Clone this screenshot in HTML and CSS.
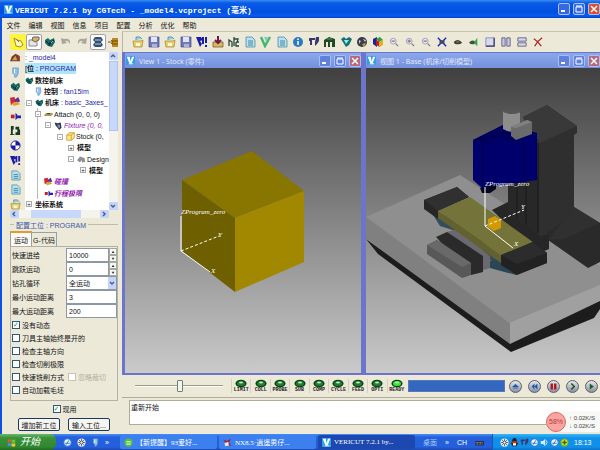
FILE: index.html
```html
<!DOCTYPE html>
<html lang="zh-CN">
<head>
  <meta charset="UTF-8">
  <title>VERICUT 7.2.1</title>
  <link rel="stylesheet" href="styles.css">
</head>
<body>
  <!-- icon set -->
  <svg class="sprite" aria-hidden="true">
    <symbol id="logo" viewBox="0 0 12 12"><rect width="12" height="12" fill="#2f9fe8"/><path d="M1 1h4l1 6 2-6h3L7 11H5z" fill="#fff"/><path d="M6 8l5 3H3z" fill="#cdeaff"/></symbol>
    <symbol id="hand" viewBox="0 0 12 12"><path d="M2 2l3 2 4 1 2 4-3 2-4-1-1-4z" fill="#fff6c0" stroke="#a09020"/><path d="M4 3l3 3" stroke="#776"/></symbol>
    <symbol id="note" viewBox="0 0 12 12"><path d="M1 4h8v6H1z" fill="#e8e8e0" stroke="#889"/><path d="M5 1h6v3L7 6 4 4z" fill="#d8b070" stroke="#665"/></symbol>
    <symbol id="machine" viewBox="0 0 12 12"><path d="M1 4l3-2 2 2 4-2 1 4-3 5-4-1-3-3z" fill="#186868"/><path d="M2 5l3 3 5-4M5 10l2-4" stroke="#0a2230" fill="none"/><path d="M7 7l2-2" stroke="#7ed0a0"/></symbol>
    <symbol id="undo" viewBox="0 0 12 12"><path d="M1 2l1 6 5-1-2-2q3-1 5 3 1-6-6-5z" fill="#a8a69a"/></symbol>
    <symbol id="redo" viewBox="0 0 12 12"><path d="M11 2l-1 6-5-1 2-2q-3-1-5 3-1-6 6-5z" fill="#a8a69a"/></symbol>
    <symbol id="spool" viewBox="0 0 12 12"><path d="M3 1h6l2 3-2 2 2 3-2 2H3L1 9l2-3-2-2z" fill="#345070"/><path d="M3 4h6M3 8h6" stroke="#b8d0e8"/></symbol>
    <symbol id="barrel" viewBox="0 0 12 12"><path d="M4 2h6v9H4z" fill="#c08820"/><path d="M4 5h6M4 8h6" stroke="#704800"/><path d="M0 6h5M3 4l2 2-2 2" stroke="#905010" fill="none"/></symbol>
    <symbol id="open" viewBox="0 0 12 12"><path d="M1 5h8l2-1-1 7H2z" fill="#e8d070" stroke="#a08428" stroke-width=".7"/><path d="M4 4V1h4l2 2" fill="#9cd0e8" stroke="#388098" stroke-width=".7"/><path d="M4 7h4v3H4z" fill="#fff8d0"/></symbol>
    <symbol id="save" viewBox="0 0 12 12"><path d="M1 1h10v10H1z" fill="#7078c0" stroke="#404890" stroke-width=".7"/><path d="M3 1h6v5H3z" fill="#dfe4ff"/><path d="M4 8h5v3H4z" fill="#b0b4d0"/></symbol>
    <symbol id="toolsblue" viewBox="0 0 12 12"><path d="M0 1h5l2 3-3 1 2 3-2 3-2-5zM6 1h2v7H6zM9 1h2v6H9zM9 9h2v2H9z" fill="#1c1ca8"/></symbol>
    <symbol id="import" viewBox="0 0 12 12"><path d="M1 6h10v5H1z" fill="#d8b860" stroke="#705010" stroke-width=".7"/><path d="M6 0v7M3 4l3 3 3-3" fill="none" stroke="#701850" stroke-width="2"/></symbol>
    <symbol id="ncode" viewBox="0 0 12 12"><path d="M1 10V4l3 2v5M6 1v9M6 3h4l-1 3h2M8 6v4h3" fill="none" stroke="#28483c" stroke-width="1.3"/></symbol>
    <symbol id="doc" viewBox="0 0 12 12"><path d="M2 1h6l3 3v7H2z" fill="#b8e0ee" stroke="#4890a8" stroke-width=".8"/><path d="M4 5h5M4 7h5M4 9h5" stroke="#4888a0"/></symbol>
    <symbol id="check" viewBox="0 0 12 12"><path d="M1 1l4 9 5-9" fill="none" stroke="#40b868" stroke-width="2.4"/><path d="M4 1l2 5 2-5" fill="#80c8e0"/></symbol>
    <symbol id="info" viewBox="0 0 12 12"><circle cx="6" cy="6" r="5" fill="#2f78c0"/><path d="M6 5v4M6 2.500v1.500" stroke="#fff" stroke-width="1.500"/></symbol>
    <symbol id="mill" viewBox="0 0 12 12"><path d="M1 2h6v2H4v5H2V5H1zM8 1h3v4L9 8 7 10V6z" fill="#38386c"/></symbol>
    <symbol id="books" viewBox="0 0 12 12"><path d="M0 4l5-3 6 2v8H8V6H6v5H4V6H2v5H0z" fill="#204828"/><path d="M3 3h5" stroke="#58a050"/></symbol>
    <symbol id="gem" viewBox="0 0 12 12"><path d="M1 3l3-2 2 2 3-2 3 2-3 6-3 2z" fill="#107078"/><path d="M4 4l2 4 3-4z" fill="#a0e8d8"/></symbol>
    <symbol id="film" viewBox="0 0 12 12"><circle cx="6" cy="6" r="5" fill="#3c3c4c"/><path d="M3 4l2 1-2 3zM7 3l3 1-1 2z" fill="#c8c8e0"/><path d="M6 8l4-1-2 4z" fill="#c8a020"/></symbol>
    <symbol id="cubes" viewBox="0 0 12 12"><path d="M1 3l4-2v10l-4-3z" fill="#20209a"/><path d="M4 3l4-2 3 3-4 2z" fill="#30a040"/><path d="M4 4l4 2v5L4 9z" fill="#c02020"/><path d="M7 6l4-2v5l-4 2z" fill="#e0b020"/></symbol>
    <symbol id="zoom" viewBox="0 0 12 12"><circle cx="5" cy="5" r="3.500" fill="#e8e8f4" stroke="#9898a8"/><path d="M3 5h4M8 8l3 3" stroke="#787888" stroke-width="1.400"/></symbol>
    <symbol id="zoomin" viewBox="0 0 12 12"><circle cx="5" cy="5" r="3.500" fill="#e8e8f4" stroke="#9898a8"/><path d="M3 5h4M5 3v4M8 8l3 3" stroke="#787888" stroke-width="1.400"/></symbol>
    <symbol id="fit" viewBox="0 0 12 12"><path d="M1 1l10 10M11 1L1 11" stroke="#2020b0" stroke-width="1.600"/><path d="M3 4h6v4H3z" fill="#385060"/></symbol>
    <symbol id="eye" viewBox="0 0 12 12"><path d="M1 6q5-5 10 1-4 3-9 1z" fill="#38402c"/><path d="M4 6h3" stroke="#a8b090"/></symbol>
    <symbol id="speak" viewBox="0 0 12 12"><path d="M0 7q3-4 7-2v3q-4 2-7-1z" fill="#38583c"/><path d="M7 5l3-4v10L7 8z" fill="#30a848"/></symbol>
    <symbol id="pane" viewBox="0 0 12 12"><path d="M1 1h10v10H1z" fill="#d8d8f0" stroke="#8888a8"/><path d="M11 1v10H1" fill="none" stroke="#383868" stroke-width="1.500"/></symbol>
    <symbol id="panev" viewBox="0 0 12 12"><path d="M1 1h4v10H1zM7 1h4v10H7z" fill="#c8c8e4" stroke="#585878"/></symbol>
    <symbol id="paneh" viewBox="0 0 12 12"><path d="M1 1h10v4H1zM1 7h10v4H1z" fill="#d8d8ec" stroke="#585878"/></symbol>
    <symbol id="cross" viewBox="0 0 12 12"><path d="M1 2q5 3 9 9M11 1Q5 5 2 11" fill="none" stroke="#b02020" stroke-width="1.500"/></symbol>
    <symbol id="hat" viewBox="0 0 12 12"><path d="M0 10l2-5 4-3 4 2 1 6z" fill="#704030"/><path d="M2 9l4-5 2 5z" fill="#d8a040"/><path d="M8 3l3 2-1 4z" fill="#c03020"/></symbol>
    <symbol id="control" viewBox="0 0 12 12"><path d="M3 1h6v6L7 11H5V8L3 7z" fill="#90c0e8" stroke="#5888b8" stroke-width=".7"/><path d="M5 2v5" stroke="#fff"/></symbol>
    <symbol id="crash" viewBox="0 0 12 12"><path d="M0 2l5-1 1 5-5 4z" fill="#d02838"/><path d="M5 4l4-3 2 5-5 2z" fill="#603090"/><path d="M2 8l6-2 3 3-7 2z" fill="#e0a030"/></symbol>
    <symbol id="limit" viewBox="0 0 12 12"><path d="M1 4h4v4H1z" fill="#c02020"/><path d="M6 2l2 2v4l-2 2zM8 5h4v3H8z" fill="#2020b8"/></symbol>
    <symbol id="lathe" viewBox="0 0 12 12"><path d="M1 1h3v4H3v5h2v1H0v-1h1zM6 2h4v3h1v6H6V8h2V5H6z" fill="#183820"/></symbol>
    <symbol id="target" viewBox="0 0 12 12"><circle cx="6" cy="6" r="5" fill="#fff" stroke="#1818a0"/><path d="M6 6V1a5 5 0 015 5zM6 6v5a5 5 0 01-5-5z" fill="#1818a0"/></symbol>
    <symbol id="attach" viewBox="0 0 12 12"><path d="M0 7l3-3h8l1 2-3 2H1z" fill="#a89858"/><path d="M3 4h6l-3 2z" fill="#504828"/></symbol>
    <symbol id="stock" viewBox="0 0 12 12"><path d="M1 4h6v7H1zM1 4l3-3h7v7l-4 3M7 4l4-3" fill="#ffe890" stroke="#c89020"/></symbol>
    <symbol id="fixture" viewBox="0 0 12 12"><path d="M1 2l4 1 4-1 1 7-3 3-3-4-2-2z" fill="#303858"/><path d="M4 5h4v4H6z" fill="#8090b0"/></symbol>
    <symbol id="design" viewBox="0 0 12 12"><path d="M0 7l4-5 6 2 1 5-4 1-1-3-2 3z" fill="#909090"/></symbol>
    <symbol id="globe" viewBox="0 0 12 12"><circle cx="6" cy="6" r="5" fill="#e0f4ff" stroke="#2878d0" stroke-width="1.500"/><path d="M3 7h6M8 3L4 9" stroke="#2858a0"/></symbol>
    <symbol id="fan" viewBox="0 0 12 12"><circle cx="6" cy="6" r="5.500" fill="#e8ecf4"/><path d="M6 1v10M1 6h10M2.500 2.500l7 7M9.500 2.500l-7 7" stroke="#485870"/><circle cx="6" cy="6" r="2" fill="#fff" stroke="#334"/></symbol>
    <symbol id="penguin" viewBox="0 0 12 12"><path d="M3 4q0-4 3-4t3 4l2 4-2 1v2H3V9L1 8z" fill="#202020"/><path d="M4 5h4v5H4z" fill="#fff"/><path d="M2 5h8v2H2z" fill="#e02818"/></symbol>
    <symbol id="sound" viewBox="0 0 12 12"><path d="M1 4h3l3-3v10L4 8H1z" fill="#d8e8f8"/><path d="M8 3q3 3 0 6" fill="none" stroke="#fff"/></symbol>
    <symbol id="shield" viewBox="0 0 12 12"><circle cx="6" cy="6" r="5.500" fill="#58b828"/><circle cx="6" cy="6" r="4" fill="#f8d838"/><path d="M6 3v6M3 6h6" stroke="#287010" stroke-width="2"/></symbol>
    <symbol id="browser" viewBox="0 0 12 12"><circle cx="6" cy="6" r="5.500" fill="#58c038"/><path d="M3 5h6M3 8h6" stroke="#f4fce8" stroke-width="1.500"/></symbol>
    <symbol id="bird" viewBox="0 0 12 12"><path d="M0 2l5 2 6-3-3 5 3 4H6L4 7z" fill="#a02030"/><path d="M2 7l5-2 1 5-5 1z" fill="#e8e8f0"/></symbol>
    <symbol id="keys" viewBox="0 0 12 12"><path d="M0 4h12v6H0z" fill="#28304c"/><path d="M1 6h10M1 8h10" stroke="#c8c8b8" stroke-dasharray="1 1"/></symbol>
    <symbol id="led" viewBox="0 0 12 8"><ellipse cx="6" cy="4" rx="5.500" ry="3.800" fill="#0c4018"/><ellipse cx="6" cy="4" rx="4" ry="2.500" fill="currentColor"/><ellipse cx="6" cy="3" rx="2" ry="1" fill="#b8e8b8"/></symbol>
    <symbol id="min" viewBox="0 0 10 10"><path d="M2 7h4" stroke="#fff" stroke-width="2"/></symbol>
    <symbol id="max" viewBox="0 0 10 10"><path d="M2 3h6v5H2zM2 2h6" fill="none" stroke="#fff"/></symbol>
    <symbol id="close" viewBox="0 0 10 10"><path d="M2 2l6 6M8 2L2 8" stroke="#fff" stroke-width="1.500"/></symbol>
    <symbol id="chev" viewBox="0 0 8 8"><path d="M2 3l2 2 2-2" fill="none" stroke="#4d6185" stroke-width="1.500"/></symbol>
  </svg>

  <header class="titlebar">
    <svg class="logo"><use href="#logo"/></svg>
    <h1>VERICUT 7.2.1 by CGTech - _model4.vcproject (毫米)</h1>
    <div class="winbtns">
      <button title="最小化"><svg><use href="#min"/></svg></button>
      <button title="最大化"><svg><use href="#max"/></svg></button>
      <button title="关闭" class="red"><svg><use href="#close"/></svg></button>
    </div>
  </header>

  <nav class="menu">
    <button>文件</button><button>编辑</button><button>视图</button><button>信息</button><button>项目</button><button>配置</button><button>分析</button><button>优化</button><button>帮助</button>
  </nav>

  <div class="workspace">
    <aside class="side">
      <div class="sidebar-tools">
        <button class="yellow"><svg><use href="#hand"/></svg></button>
        <button class="pressed"><svg><use href="#note"/></svg></button>
        <button><svg><use href="#machine"/></svg></button>
        <button><svg><use href="#undo"/></svg></button>
        <button><svg><use href="#redo"/></svg></button>
        <button class="pressed"><svg><use href="#spool"/></svg></button>
        <button><svg><use href="#barrel"/></svg></button>
      </div>

      <div class="project">
        <div class="rail">
          <button><svg><use href="#hat"/></svg></button>
          <button><svg><use href="#control"/></svg></button>
          <button><svg><use href="#machine"/></svg></button>
          <button><svg><use href="#crash"/></svg></button>
          <button><svg><use href="#limit"/></svg></button>
          <button><svg><use href="#lathe"/></svg></button>
          <button><svg><use href="#target"/></svg></button>
          <button><svg><use href="#toolsblue"/></svg></button>
          <button><svg><use href="#doc"/></svg></button>
          <button><svg><use href="#doc"/></svg></button>
          <button><svg><use href="#open"/></svg></button>
        </div>
        <ul class="tree">
          <li class="blue">: _model4</li>
          <li><span class="picked">[<b>位</b> : <span class="blue">PROGRAM</span></span></li>
          <li><svg><use href="#machine"/></svg><b>数控机床</b></li>
          <li class="l1"><svg><use href="#control"/></svg><b>控制</b>&nbsp;: <span class="blue">fan15im</span></li>
          <li><i class="box">-</i><svg><use href="#machine"/></svg><b>机床</b>&nbsp;: <span class="blue">basic_3axes_</span></li>
          <li class="l1 stem"><i class="box">-</i><svg><use href="#attach"/></svg>Attach (0, 0, 0)</li>
          <li class="l2 stem"><i class="box">-</i><svg><use href="#fixture"/></svg><em>Fixture (0, 0,</em></li>
          <li class="l3 stem"><i class="box">-</i><svg><use href="#stock"/></svg>Stock (0,</li>
          <li class="l4 stem"><i class="box">+</i><b>模型</b></li>
          <li class="l4 stem"><i class="box">-</i><svg><use href="#design"/></svg>Design</li>
          <li class="l5 stem"><i class="box">+</i><b>模型</b></li>
          <li class="l2 stem"><svg><use href="#crash"/></svg><em><b>碰撞</b></em></li>
          <li class="l2 stem"><svg><use href="#limit"/></svg><em><b>行程极限</b></em></li>
          <li><i class="box">+</i><b>坐标系统</b></li>
        </ul>
        <div class="vscroll"><button><svg class="up"><use href="#chev"/></svg></button><span class="thumb"></span><button><svg><use href="#chev"/></svg></button></div>
        <div class="hscroll"><button><svg class="left"><use href="#chev"/></svg></button><span class="thumb"></span><button><svg class="right"><use href="#chev"/></svg></button></div>
      </div>

      <h2 class="caption">配置工位 : PROGRAM</h2>
      <div class="tabs"><button class="on">运动</button><button>G-代码</button></div>
      <form class="motion">
        <div class="field"><label for="rapid">快速进给</label><input id="rapid" value="10000"><span class="spin"><button type="button">▲</button><button type="button">▼</button></span></div>
        <div class="field"><label for="skip">跳跃运动</label><input id="skip" value="0"><span class="spin"><button type="button">▲</button><button type="button">▼</button></span></div>
        <div class="field"><label for="drill">钻孔循环</label><span class="drop"><select id="drill"><option>全运动</option></select><svg><use href="#chev"/></svg></span></div>
        <div class="field"><label for="dmin">最小运动距离</label><input id="dmin" class="wide" value="3"></div>
        <div class="field"><label for="dmax">最大运动距离</label><input id="dmax" class="wide" value="200"></div>
        <div class="tick"><label><input type="checkbox" checked>没有动态</label></div>
        <div class="tick"><label><input type="checkbox">刀具主轴始终是开的</label></div>
        <div class="tick"><label><input type="checkbox">检查主轴方向</label></div>
        <div class="tick"><label><input type="checkbox">检查切削极限</label></div>
        <div class="tick"><label><input type="checkbox">快速铣削方式</label><label class="off"><input type="checkbox" disabled>忽略裁切</label></div>
        <div class="tick"><label><input type="checkbox">自动加载毛坯</label></div>
      </form>
      <div class="tick active"><label><input type="checkbox" checked>现用</label></div>
      <div class="actions"><button>增加新工位</button><button>输入工位...</button></div>
    </aside>

    <main>
      <div class="toolbar">
        <button><svg><use href="#open"/></svg></button>
        <button><svg><use href="#save"/></svg></button>
        <button><svg><use href="#open"/></svg></button>
        <button><svg><use href="#save"/></svg></button>
        <button><svg><use href="#toolsblue"/></svg></button>
        <button><svg><use href="#import"/></svg></button>
        <button><svg><use href="#ncode"/></svg></button>
        <button><svg><use href="#doc"/></svg></button>
        <button><svg><use href="#check"/></svg></button>
        <button><svg><use href="#doc"/></svg></button>
        <button><svg><use href="#info"/></svg></button>
        <button><svg><use href="#mill"/></svg></button>
        <button><svg><use href="#books"/></svg></button>
        <button><svg><use href="#gem"/></svg></button>
        <button><svg><use href="#film"/></svg></button>
        <button><svg><use href="#cubes"/></svg></button>
        <button><svg><use href="#zoom"/></svg></button>
        <button><svg><use href="#zoomin"/></svg></button>
        <button><svg><use href="#zoom"/></svg></button>
        <button><svg><use href="#fit"/></svg></button>
        <button><svg><use href="#eye"/></svg></button>
        <button><svg><use href="#speak"/></svg></button>
        <button><svg><use href="#pane"/></svg></button>
        <button><svg><use href="#panev"/></svg></button>
        <button><svg><use href="#paneh"/></svg></button>
        <button><svg><use href="#cross"/></svg></button>
      </div>

      <div class="views">
        <section class="view">
          <header>
            <svg class="logo"><use href="#logo"/></svg>
            <h3>View 1 - Stock (零件)</h3>
            <div class="winbtns">
              <button><svg><use href="#min"/></svg></button>
              <button><svg><use href="#max"/></svg></button>
              <button class="red"><svg><use href="#close"/></svg></button>
            </div>
          </header>
          <svg class="scene" viewBox="0 0 236 305">
            <path d="M57 112L127 83l52 40-69 27z" fill="#897600"/>
            <path d="M57 112l53 38v74l-53-41z" fill="#6e6000"/>
            <path d="M110 150l69-27v71l-69 30z" fill="#a28800"/>
            <path d="M56 148v35l29 21" fill="none" stroke="#fff"/>
            <path d="M56 183l38-15" stroke="#fff" stroke-dasharray="3 2"/>
            <text x="56" y="146">ZProgram_zero</text>
            <text x="93" y="169">Y</text>
            <text x="86" y="205">X</text>
          </svg>
        </section>

        <section class="view">
          <header>
            <svg class="logo"><use href="#logo"/></svg>
            <h3>视图 1 - Base (机床/切削模型)</h3>
            <div class="winbtns">
              <button><svg><use href="#min"/></svg></button>
              <button><svg><use href="#max"/></svg></button>
              <button class="red"><svg><use href="#close"/></svg></button>
            </div>
          </header>
          <svg class="scene" viewBox="0 0 234 305">
            <!-- bed -->
            <path d="M0 171l12 15 133 98 83-34 6-9v-9l-89 40z" fill="#1c1c1c"/>
            <path d="M0 149l94-42 140 91v19l-90 38z" fill="#8f8f8f"/>
            <path d="M0 149l144 106v21L0 171z" fill="#808080"/>
            <path d="M144 255l90-38v16l-90 43z" fill="#a0a0a0"/>
            <!-- column -->
            <path d="M208 139l26 16v39l-12 6-40-28-10-30z" fill="#2a2a2a"/>
            <path d="M208 139l26 16-36 16-16 1z" fill="#303030"/>
            <path d="M126 142l16-8 41 35v12l-12 5z" fill="#262626"/>
            <path d="M142 100h35v70l-35-25z" fill="#282828"/>
            <path d="M157 49l24-12 30 21v7l-3 2v79l-33 23-4-4V80z" fill="#2f2f2f"/>
            <path d="M157 49l24-12 30 21-37 17z" fill="#393939"/>
            <path d="M151 112v38M160 112v44M172 75v90" stroke="#202020" stroke-width="2"/>
            <!-- spindle head -->
            <path d="M107 72l30-15 34 8v47l-40 6-13 4-11-10z" fill="#00006c"/>
            <path d="M107 72l30-15 34 8-22 9-18-4-14 8z" fill="#00005c"/>
            <path d="M117 78v40M158 72v40" stroke="#000054" stroke-width="2"/>
            <path d="M114 120l16-4v5l-6 4h-8z" fill="#050520"/>
            <path d="M137 43v18q9 6 17-1V43z" fill="#8d8d8d"/>
            <ellipse cx="146" cy="43" rx="9" ry="3" fill="#555"/>
            <path d="M145 59l16-7 5 2v12l-16 6-5-4z" fill="#6b6b6b"/>
            <path d="M145 59l16-7 5 2-16 6z" fill="#808080"/>
            <!-- saddle and table -->
            <path d="M64 142l10 16 16 5 40 34 6-4-40-40z" fill="#344c5c"/>
            <path d="M124 193v7l26 7 31-12v-9z" fill="#2b4456"/>
            <path d="M81 164l10-3 33 27v12l-10 3z" fill="#6c6870"/>
            <path d="M70 169l11-5 36 24v16l-12 3z" fill="#2a2a2a"/>
            <path d="M61 177l10-5 34 23v12l-9 3-35-24z" fill="#585858"/>
            <path d="M61 177l10-5 34 23-9 4z" fill="#696969"/>
            <path d="M58 132l33-13 12 10-31 14v8l-14-10z" fill="#262626"/>
            <path d="M58 132l33-13 12 10-31 14z" fill="#303030"/>
            <path d="M72 143l32-14 63 45-32 13z" fill="#74733a"/>
            <path d="M72 143l63 44v8l-63-45z" fill="#63622f"/>
            <path d="M135 187l32-13 14 11v10l-30 12-16-10z" fill="#222"/>
            <path d="M135 187l32-13 14 11-30 11z" fill="#2c2c2c"/>
            <path d="M122 151l7-3 6 4v8l-7 3-6-4z" fill="#d39a00"/>
            <path d="M119 119v39l28 22" fill="none" stroke="#fff"/>
            <path d="M119 158l39-16" stroke="#fff" stroke-dasharray="3 2"/>
            <text x="119" y="118">ZProgram_zero</text>
            <text x="155" y="141">Y</text>
            <text x="148" y="178">X</text>
          </svg>
        </section>
      </div>

      <div class="playbar">
        <input class="speed" type="range" min="0" max="100" value="51" aria-label="速度">
        <ul class="leds">
          <li><svg><use href="#led"/></svg>LIMIT</li>
          <li><svg><use href="#led"/></svg>COLL</li>
          <li><svg><use href="#led"/></svg>PROBE</li>
          <li><svg><use href="#led"/></svg>SUB</li>
          <li><svg><use href="#led"/></svg>COMP</li>
          <li><svg><use href="#led"/></svg>CYCLE</li>
          <li><svg><use href="#led"/></svg>FEED</li>
          <li><svg><use href="#led"/></svg>OPTI</li>
          <li class="lit"><svg><use href="#led"/></svg>READY</li>
        </ul>
        <div class="progress"></div>
        <div class="transport">
          <button><svg viewBox="0 0 12 12"><path d="M1 7l5-5 5 5zM2 9h8" fill="#1858b0" stroke="#1858b0"/></svg></button>
          <button><svg viewBox="0 0 12 12"><path d="M6 1v10L1 6zM11 1v10L6 6z" fill="#1858b0"/></svg></button>
          <button><svg viewBox="0 0 12 12"><path d="M1 1h4v10H1zM7 1h4v10H7z" fill="#b01020"/></svg></button>
          <button><svg viewBox="0 0 12 12"><path d="M4 1l5 5-5 5" fill="none" stroke="#185020" stroke-width="2.5"/></svg></button>
          <button><svg viewBox="0 0 12 12"><path d="M3 1l7 5-7 5z" fill="#186028"/></svg></button>
        </div>
      </div>

      <div class="log">
        <textarea aria-label="日志" readonly>重新开始</textarea>
        <div class="netmeter">
          <span class="load">58%</span>
          <span class="rate"><span><i class="upload">↑</i> 0.02K/S</span><span><i class="download">↓</i> 0.02K/S</span></span>
        </div>
      </div>
    </main>
  </div>

  <footer class="taskbar">
    <button class="start"><svg viewBox="0 0 12 12"><path d="M1 2q2-1 4 0v4q-2-1-4 0z" fill="#e85828"/><path d="M6 2q2 1 5 0v4q-3 1-5 0z" fill="#70c030"/><path d="M1 7q2-1 4 0v4q-2-1-4 0z" fill="#4890f0"/><path d="M6 7q2 1 5 0v4q-3 1-5 0z" fill="#f8c828"/></svg>开始</button>
    <div class="quick">
      <svg><use href="#globe"/></svg><svg><use href="#fan"/></svg><svg><use href="#control"/></svg><span>»</span>
    </div>
    <div class="tasks">
      <button><svg><use href="#browser"/></svg>【新提醒】93爱好...</button>
      <button><svg><use href="#bird"/></svg>NX8.5·逍遥男仔...</button>
      <button class="current"><svg><use href="#logo"/></svg>VERICUT 7.2.1 by...</button>
    </div>
    <div class="lang"><span class="desk">桌面</span><span>»</span><span>CH</span><svg><use href="#keys"/></svg></div>
    <div class="tray">
      <svg><use href="#fan"/></svg><svg><use href="#penguin"/></svg><svg><use href="#mill"/></svg><svg><use href="#globe"/></svg><svg><use href="#sound"/></svg><svg><use href="#globe"/></svg><svg><use href="#shield"/></svg>
      <time>18:13</time>
    </div>
  </footer>
</body>
</html>
```
FILE: styles.css
```css
* {
  box-sizing: border-box;
}
body {
  margin: 0;
  height: 100vh;
  display: grid;
  grid-template-rows: 18px 13px 1fr 16px;
  background: #ece9d8;
  color: #111;
  font: 7px "Liberation Sans", "Noto Sans CJK SC", sans-serif;
  overflow: hidden;
}
.sprite {
  position: absolute;
  width: 0;
  height: 0;
}
svg {
  display: block;
  flex: none;
}
button, input, select, textarea {
  margin: 0;
  padding: 0;
  border: 0;
  background: none;
  color: inherit;
  font: inherit;
}
h1, h2, h3, ul {
  margin: 0;
  padding: 0;
  font-size: 7px;
  list-style: none;
}

/* title bar */
.titlebar {
  display: flex;
  align-items: center;
  padding-left: 4px;
  background: linear-gradient(#3a8cf0 0, #0a5ae8 3px, #0050e0 12px, #0a5af0 16px, #0040c0);
  color: #fff;
}
.logo {
  width: 9px;
  height: 9px;
}
.titlebar h1 {
  flex: 1;
  margin-left: 2px;
  font: bold 8px "Liberation Mono", "Noto Sans CJK SC", monospace;
  white-space: nowrap;
}
.winbtns {
  display: flex;
  gap: 3px;
}
.winbtns button {
  width: 12px;
  height: 12px;
  border: 1px solid #a8c0f8;
  border-radius: 2px;
  background: #3868e0;
}
.winbtns svg {
  width: 10px;
  height: 10px;
}
.winbtns .red {
  background: #d85030;
}

.menu {
  display: flex;
  gap: 7px;
  padding-left: 4px;
  border-left: 2px solid #1050e0;
}
.menu button {
  width: 15px;
  white-space: nowrap;
}

.workspace {
  display: grid;
  grid-template-columns: 122px 1fr;
  min-height: 0;
}

/* left panel */
.side {
  display: flex;
  flex-direction: column;
  min-width: 0;
  padding: 0 4px 0 8px;
  border-left: 2px solid #1050e0;
}
.sidebar-tools {
  display: flex;
  height: 21px;
  align-items: center;
  border-top: 1px solid #c8c4b4;
  flex: none;
}
.sidebar-tools button {
  width: 16px;
  height: 16px;
  padding: 1px;
  border: 1px solid transparent;
  flex: none;
}
.sidebar-tools svg {
  width: 12px;
  height: 12px;
}
.sidebar-tools .yellow {
  background: #fcf440;
}
.sidebar-tools .pressed {
  background: #fff;
  border-color: #a0a0b0;
  border-radius: 2px;
}
.project {
  display: grid;
  grid-template-columns: 15px 1fr 9px;
  grid-template-rows: 158px 8px;
}
.rail {
  display: flex;
  flex-direction: column;
  justify-content: space-between;
}
.rail svg {
  width: 11px;
  height: 11px;
}
.tree {
  display: flex;
  flex-direction: column;
  overflow: hidden;
  background: #fff;
}
.tree li {
  display: flex;
  flex: 1;
  align-items: center;
  min-height: 0;
  line-height: 11px;
  white-space: pre;
}
.tree svg {
  width: 9px;
  height: 9px;
  margin-right: 1px;
}
.tree .l1 { padding-left: 9px; }
.tree .l2 { padding-left: 19px; }
.tree .l3 { padding-left: 31px; }
.tree .l4 { padding-left: 42px; }
.tree .l5 { padding-left: 54px; }
.tree .stem {
  background: linear-gradient(#b8b8b8, #b8b8b8) 12px 0 / 1px 100% no-repeat;
}
.box {
  width: 6px;
  height: 6px;
  margin: 0 3px 0 1px;
  flex: none;
  border: 1px solid #aaa;
  background: #fff;
  font-size: 6px;
  font-style: normal;
  line-height: 4px;
  text-align: center;
}
.blue {
  color: #2828a8;
}
.tree em {
  color: #9020b0;
}
.picked {
  background: #b0e4fc;
}
.vscroll, .hscroll {
  display: flex;
  background: #f4f3ec;
}
.vscroll {
  flex-direction: column;
}
.hscroll {
  grid-column: 1 / 3;
}
.vscroll button, .hscroll button {
  width: 9px;
  height: 8px;
  border-radius: 1px;
  background: #c4d4fc;
}
.vscroll svg, .hscroll svg {
  width: 8px;
  height: 8px;
}
.vscroll .thumb {
  height: 70px;
  margin: 1px 0 auto;
  border: 1px solid #b0c4f4;
  background: #c8d8fc;
}
.hscroll .thumb {
  width: 50px;
  margin: 0 auto 0 12px;
  background: #c8d8fc;
}
.up { transform: rotate(180deg); }
.left { transform: rotate(90deg); }
.right { transform: rotate(-90deg); }

.caption {
  display: flex;
  align-items: center;
  gap: 2px;
  height: 13px;
  color: #3858a8;
  font-weight: normal;
  white-space: nowrap;
}
.caption::before, .caption::after {
  content: "";
  width: 4px;
  height: 1px;
  background: #c0bca8;
}
.caption::after {
  flex: 1;
}
.tabs {
  display: flex;
  height: 15px;
  align-items: flex-end;
}
.tabs button {
  height: 14px;
  width: 25px;
  border: 1px solid #98a0a0;
  border-bottom: 0;
  border-left: 0;
  white-space: nowrap;
}
.tabs .on {
  width: 22px;
  height: 15px;
  border-left: 1px solid #98a0a0;
  border-top: 2px solid #e89830;
  background: #fbfaf6;
}
.motion {
  padding: 1px 0 4px;
  border: 1px solid #b4b2a4;
}
.field {
  display: grid;
  grid-template-columns: 55px 1fr 8px;
  height: 14px;
  align-items: center;
}
.field label {
  padding-left: 1px;
  white-space: nowrap;
}
.field > input, .drop {
  width: 100%;
  min-width: 0;
  height: 14px;
  padding-left: 2px;
  border: 1px solid #8c98a4;
  background: #fff;
}
.field > .wide, .drop {
  grid-column: 2 / 4;
}
.spin {
  display: flex;
  flex-direction: column;
}
.spin button {
  height: 7px;
  border: 1px solid #a8a8a0;
  background: #f8f8f4;
  font-size: 4px;
  line-height: 4px;
}
.drop {
  display: flex;
  align-items: center;
}
.drop select {
  flex: 1;
  min-width: 0;
  appearance: none;
}
.drop svg {
  width: 8px;
  height: 12px;
  background: #c4d4fc;
}
.tick {
  display: flex;
  gap: 4px;
  height: 13px;
  padding-left: 1px;
  align-items: center;
  white-space: nowrap;
}
.tick label {
  display: flex;
  align-items: center;
  gap: 2px;
}
.tick input {
  appearance: none;
  width: 8px;
  height: 8px;
  border: 1px solid #305880;
  background: #fff;
}
.tick input:checked::after {
  content: "✓";
  display: block;
  color: #189028;
  font: bold 7px/6px "DejaVu Sans", sans-serif;
}
.tick .off {
  color: #b4b0a0;
}
.tick .off input {
  border-color: #c8c4b4;
}
.active {
  justify-content: center;
  margin-top: 1px;
}
.actions {
  display: flex;
  gap: 8px;
  justify-content: center;
  margin-top: 3px;
}
.actions button {
  width: 42px;
  height: 13px;
  border: 1px solid #183868;
  border-radius: 2px;
  background: #f6f5f0;
  white-space: nowrap;
}

/* right side */
main {
  display: grid;
  grid-template-rows: 21px 1fr 22px 37px;
  min-width: 0;
}
.toolbar {
  display: flex;
  gap: 4px;
  align-items: center;
  padding-left: 9px;
  border-top: 1px solid #c8c4b4;
  border-left: 1px solid #b8b4a4;
}
.toolbar svg {
  width: 12px;
  height: 12px;
}
.toolbar button:nth-child(n+17) svg {
  padding: 1px;
}
.views {
  display: grid;
  grid-template-columns: 236fr 234fr;
  gap: 5px;
  min-height: 0;
  padding: 1px 0 2px 3px;
  background: #6c74cc;
}
.view {
  display: flex;
  flex-direction: column;
  min-width: 0;
  min-height: 0;
}
.view header {
  display: flex;
  height: 15px;
  align-items: center;
  flex: none;
  padding-left: 1px;
  background: linear-gradient(#8ca8ec, #7490dc);
}
.view h3 {
  flex: 1;
  margin-left: 4px;
  color: #e0e8fc;
  font: 7px "Noto Sans", "Noto Sans CJK SC", sans-serif;
  white-space: nowrap;
}
.view .winbtns button {
  background: #6080dc;
}
.view .winbtns .red {
  background: #b86878;
}
.scene {
  flex: 1;
  width: 100%;
  min-height: 0;
  background: linear-gradient(#404040, #cacaca);
}
.scene text {
  fill: #fff;
  font: italic 7px "Liberation Serif", serif;
}

.playbar {
  display: flex;
  align-items: center;
  padding: 0 2px 0 13px;
}
.speed {
  appearance: none;
  width: 88px;
  height: 12px;
  margin-right: 8px;
}
.speed::-webkit-slider-runnable-track {
  height: 2px;
  border-top: 1px solid #a09c8c;
  background: #fff;
}
.speed::-webkit-slider-thumb {
  appearance: none;
  width: 6px;
  height: 12px;
  margin-top: -6px;
  border: 1px solid #708078;
  border-radius: 1px;
  background: #f4f4ec;
}
.leds {
  display: grid;
  grid-template-columns: repeat(9, 1fr);
  width: 175px;
}
.leds li {
  display: flex;
  flex-direction: column;
  align-items: center;
  border-left: 1px solid #d4d0c0;
  color: #222;
  font: bold 5px/5px "Liberation Mono", monospace;
}
.leds svg {
  width: 12px;
  height: 9px;
  color: #208030;
}
.leds .lit svg {
  color: #30f030;
}
.progress {
  flex: 1;
  height: 12px;
  margin: 0 4px 0 2px;
  border: 1px solid #5878b8;
  background: #3468c0;
}
.transport {
  display: flex;
  gap: 6px;
}
.transport button {
  width: 13px;
  height: 13px;
  padding: 2px;
  border: 1px solid #586070;
  border-radius: 50%;
  background: linear-gradient(#e8e8ec, #8c90a0);
}
.transport svg {
  width: 7px;
  height: 7px;
}
.log {
  position: relative;
  padding: 2px 0 9px 7px;
  border-top: 1px solid #b0ac9c;
}
.log textarea {
  display: block;
  width: 100%;
  height: 25px;
  padding: 1px;
  border: 1px solid #b0ac9c;
  border-right: 0;
  background: #fff;
  resize: none;
}
.netmeter {
  position: absolute;
  right: 0;
  bottom: 2px;
  display: flex;
  align-items: center;
  gap: 3px;
  width: 54px;
  height: 21px;
  border-radius: 10px 2px 2px 10px;
  background: #f8f8f6;
}
.load {
  width: 20px;
  height: 20px;
  border: 1px solid #d86868;
  border-radius: 50%;
  background: #fca4a0;
  color: #b04040;
  line-height: 18px;
  text-align: center;
}
.rate {
  display: flex;
  flex-direction: column;
  gap: 2px;
  color: #444;
  font-size: 6px;
  white-space: nowrap;
}
.rate i {
  font-style: normal;
}
.upload { color: #e06020; }
.download { color: #209030; }

/* taskbar */
.taskbar {
  display: flex;
  align-items: center;
  background: linear-gradient(#4a90f8, #2460dc 3px, #2460dc 13px, #1c48b0);
  color: #fff;
}
.taskbar svg {
  width: 9px;
  height: 9px;
}
.start {
  display: flex;
  gap: 4px;
  align-items: center;
  width: 56px;
  height: 16px;
  padding-left: 7px;
  border-radius: 0 6px 6px 0;
  background: linear-gradient(#68b868, #389038 4px, #308830 13px, #206820);
  font: italic 10px/14px "Liberation Sans", "Noto Sans CJK SC", sans-serif;
}
.quick {
  display: flex;
  gap: 5px;
  align-items: center;
  width: 64px;
  padding-left: 7px;
}
.tasks {
  display: flex;
  flex: 1;
  gap: 2px;
  min-width: 278px;
  margin-right: 8px;
}
.tasks button {
  display: flex;
  flex: 1;
  gap: 3px;
  align-items: center;
  min-width: 0;
  height: 14px;
  padding-left: 4px;
  border-radius: 2px;
  background: #3c80f0;
  font: 7px "Liberation Serif", "Noto Sans CJK SC", serif;
  white-space: nowrap;
}
.tasks .current {
  background: #1c48b0;
}
.lang {
  display: flex;
  gap: 8px;
  align-items: center;
  justify-content: flex-end;
  padding-right: 8px;
}
.desk {
  color: #a8c8fc;
}
.tray {
  display: flex;
  gap: 1px;
  align-items: center;
  width: 108px;
  height: 16px;
  padding-left: 7px;
  border-left: 1px solid #1858b0;
  background: linear-gradient(#38b8f8, #1090e8 4px, #1090e8 13px, #0870c8);
}
.tray time {
  margin-left: 4px;
  white-space: nowrap;
}
```
